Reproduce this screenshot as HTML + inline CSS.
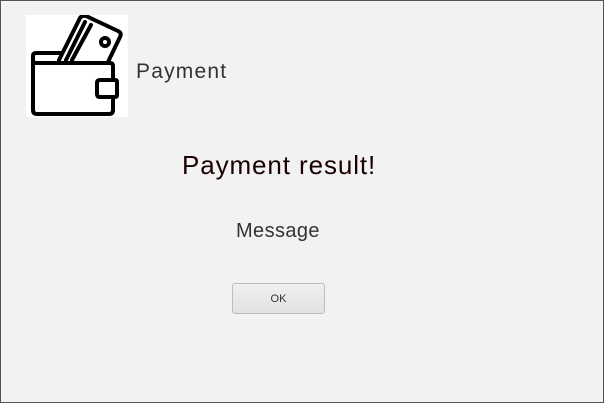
<!DOCTYPE html>
<html><head><style>
html,body{margin:0;padding:0}
body{width:604px;height:403px;background:#f2f2f2;position:relative;overflow:hidden;font-family:"Liberation Sans",sans-serif}
.frame{position:absolute;left:0;top:0;width:602px;height:401px;border:1px solid #555}
.img{position:absolute;left:26px;top:15px;width:102px;height:102px;background:#fff}
.t{position:absolute;white-space:nowrap}
.btn{position:absolute;left:232px;top:283px;width:93px;height:31px;border:1px solid #bdbdbd;border-radius:3px;background:linear-gradient(#f0f0f0,#e2e2e2);font-size:11px;color:#333;text-align:center;line-height:30px;box-sizing:border-box}
</style></head><body>
<div class="frame"></div>
<div class="img">
<svg width="102" height="102" viewBox="26 15 102 102">
<g fill="none" stroke="#000" stroke-width="4" stroke-linejoin="round" stroke-linecap="round">
<path d="M59 60 L80 18 Q82 15 86 16 L118 31 Q122 33 120 37 L108 62"/>
<path d="M66 60 L85 22"/>
<path d="M72 60 L91 25"/>
<circle cx="105" cy="42" r="4"/>
<path d="M36 63 Q33 63 33 60 L33 56 Q33 53 36 53 L62 53"/>
<path d="M33 60 L33 110 Q33 114 37 114 L109 114 Q113 114 113 110 L113 97"/>
<path d="M113 80 L113 66 Q113 63 110 63 L36 63"/>
<path d="M100 80 L115 80 Q117 80 117 82 L117 95 Q117 97 115 97 L100 97 Q97 97 97 94 L97 83 Q97 80 100 80 Z"/>
</g></svg>
</div>
<div class="t" style="left:136px;top:60px;font-size:21px;letter-spacing:1.2px;color:#333">Payment</div>
<div class="t" style="left:182px;top:150px;font-size:26px;letter-spacing:0.9px;color:#1a0000">Payment result!</div>
<div class="t" style="left:236px;top:220px;font-size:20px;letter-spacing:0.4px;color:#333">Message</div>
<div class="btn">OK</div>
</body></html>
